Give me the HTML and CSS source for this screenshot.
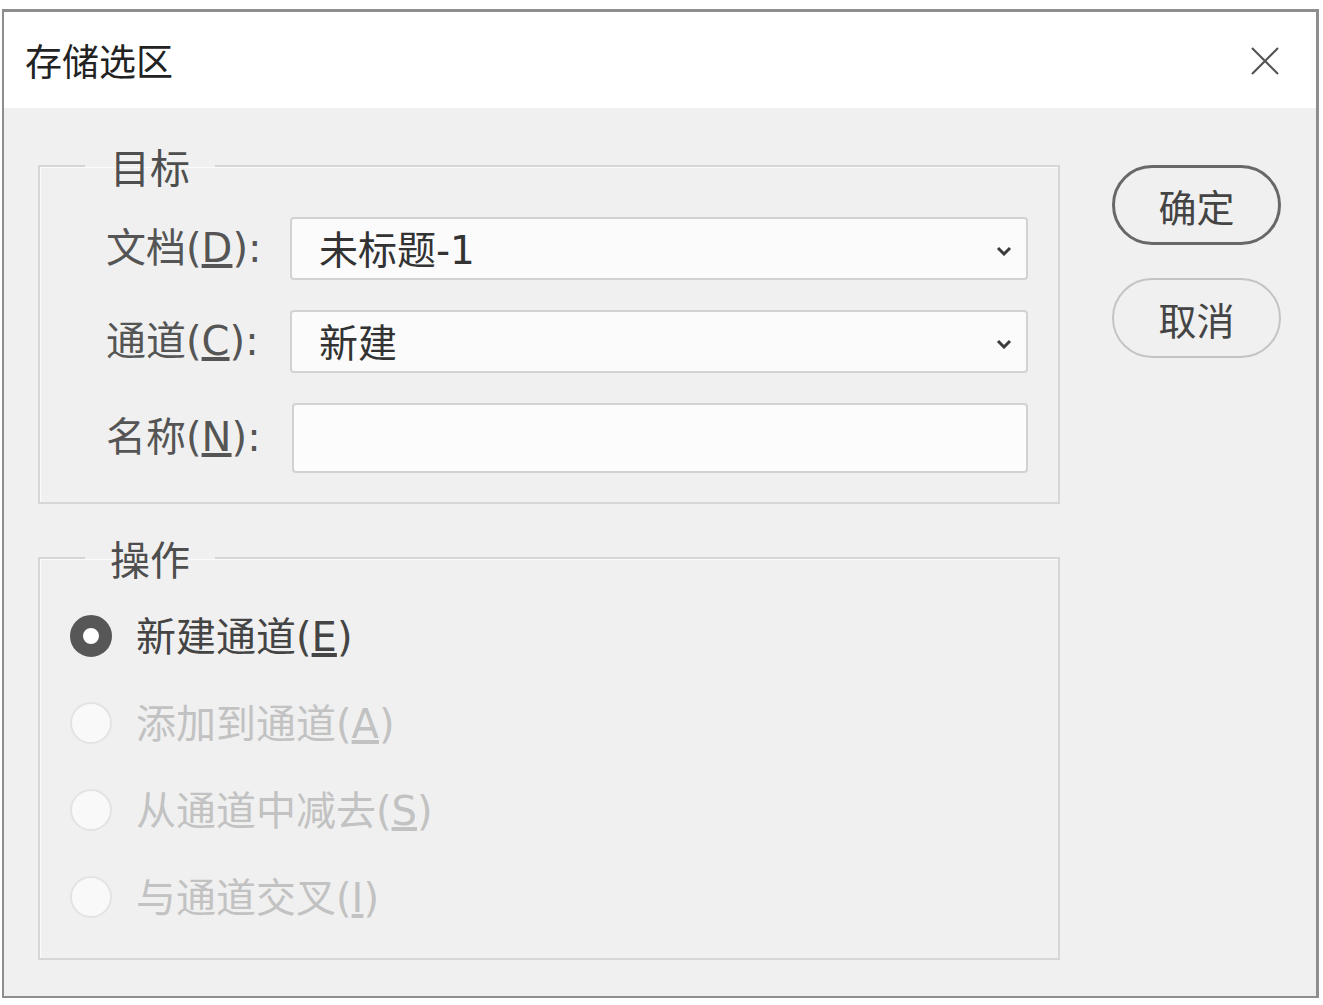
FILE: index.html
```html
<!DOCTYPE html>
<html lang="zh-CN">
<head>
<meta charset="utf-8">
<title>存储选区</title>
<link rel="stylesheet" href="styles.css">
</head>
<body>
<div class="dialog">
  <div class="titlebar">
    <span class="title">存储选区</span>
    <svg class="close" width="30" height="30" viewBox="0 0 30 30"><path d="M2 2 L28 28 M28 2 L2 28" stroke="#555" stroke-width="2.2" fill="none"/></svg>
  </div>
  <div class="body">
    <div class="main">
      <fieldset class="group">
        <legend>目标</legend>
        <div class="form">
          <label class="lbl">文档(<u>D</u>):</label>
          <div class="select"><span>未标题-1</span><svg class="chev" width="16" height="10" viewBox="0 0 16 10"><path d="M2 2 L8 8 L14 2" stroke="#3c3c3c" stroke-width="3" fill="none"/></svg></div>
          <label class="lbl">通道(<u>C</u>):</label>
          <div class="select"><span>新建</span><svg class="chev" width="16" height="10" viewBox="0 0 16 10"><path d="M2 2 L8 8 L14 2" stroke="#3c3c3c" stroke-width="3" fill="none"/></svg></div>
          <label class="lbl">名称(<u>N</u>):</label>
          <div class="input"></div>
        </div>
      </fieldset>
      <fieldset class="group g2">
        <legend>操作</legend>
        <div class="radios">
          <div class="radio checked"><span class="dot"></span><span class="rtext">新建通道(<u>E</u>)</span></div>
          <div class="radio disabled"><span class="dot"></span><span class="rtext">添加到通道(<u>A</u>)</span></div>
          <div class="radio disabled"><span class="dot"></span><span class="rtext">从通道中减去(<u>S</u>)</span></div>
          <div class="radio disabled"><span class="dot"></span><span class="rtext">与通道交叉(<u>I</u>)</span></div>
        </div>
      </fieldset>
    </div>
    <div class="buttons">
      <button class="btn primary">确定</button>
      <button class="btn">取消</button>
    </div>
  </div>
</div>
</body>
</html>
```
FILE: styles.css
```css
html, body {
  margin: 0;
  padding: 0;
  background: #ffffff;
}
body {
  font-family: "DejaVu Sans", "Noto Sans CJK SC", sans-serif;
  width: 1323px;
  height: 1005px;
  overflow: hidden;
}
.dialog {
  box-sizing: border-box;
  margin: 9px 0 0 2px;
  width: 1317px;
  height: 989px;
  border: 2px solid #8e8e8e;
  border-top-width: 3px;
  border-right-width: 3px;
  display: flex;
  flex-direction: column;
  background: #f0f0f0;
}
.titlebar {
  height: 96px;
  background: #ffffff;
  display: flex;
  align-items: center;
  justify-content: space-between;
  padding: 0 36px 0 21px;
  flex: none;
}
.title {
  font-family: "Noto Sans CJK SC", sans-serif;
  font-size: 37px;
  color: #222;
  line-height: 44px;
}
.close {
  display: block;
  margin-top: 2px;
}
.body {
  flex: 1;
  display: flex;
  padding: 35px 0 0 34px;
}
.main {
  width: 1022px;
  display: flex;
  flex-direction: column;
}
.group {
  margin: 0;
  padding: 0;
  border: 2px solid #d6d6d6;
  box-shadow: inset 1px 1px 0 #fbfbfb;
  min-inline-size: 0;
}
.group legend {
  font-family: "Noto Sans CJK SC", sans-serif;
  font-size: 40px;
  line-height: 46px;
  color: #4e4e4e;
  margin-left: 45px;
  padding: 0 25px;
}
.form {
  display: grid;
  grid-template-columns: 184px 1fr;
  grid-template-rows: 63px 63px 70px;
  row-gap: 30px;
  align-items: center;
  padding: 28px 30px 29px 66px;
}
.lbl {
  font-size: 40px;
  color: #555;
  line-height: 48px;
  white-space: nowrap;
  margin-top: -2px;
}
.select, .input {
  box-sizing: border-box;
  height: 100%;
  border: 2px solid #d2d2d2;
  border-radius: 4px;
  background: #fbfbfb;
  display: flex;
  align-items: center;
  justify-content: space-between;
  padding: 0 14px 0 27px;
  font-size: 39px;
  color: #333;
}
.select span {
  margin-top: -3px;
}
.input {
  background: #fcfcfc;
  margin-left: 2px;
}
.chev {
  display: block;
  margin-top: 4px;
}
.g2 {
  margin-top: 31px;
}
.radios {
  padding: 11px 0 18px 30px;
}
.radio {
  height: 87px;
  display: flex;
  align-items: center;
  gap: 24px;
  font-size: 40px;
}
.rtext {
  margin-top: -3px;
}
.dot {
  box-sizing: border-box;
  width: 42px;
  height: 42px;
  border-radius: 50%;
  flex: none;
}
.checked .dot {
  border: 13px solid #575757;
  background: #ffffff;
}
.checked .rtext {
  color: #444;
}
.disabled .dot {
  border: 2px solid #e3e3e3;
  background: #f9f9f9;
}
.disabled .rtext {
  color: #c2c2c2;
}
.buttons {
  margin: 22px 0 0 52px;
  display: flex;
  flex-direction: column;
  gap: 33px;
}
.btn {
  box-sizing: border-box;
  width: 169px;
  height: 80px;
  border-radius: 40px;
  border: 2px solid #c4c4c4;
  background: #f0f0f0;
  font-family: "Noto Sans CJK SC", sans-serif;
  font-size: 38px;
  color: #444;
  padding: 0;
}
.btn.primary {
  border: 3px solid #686868;
}
```
